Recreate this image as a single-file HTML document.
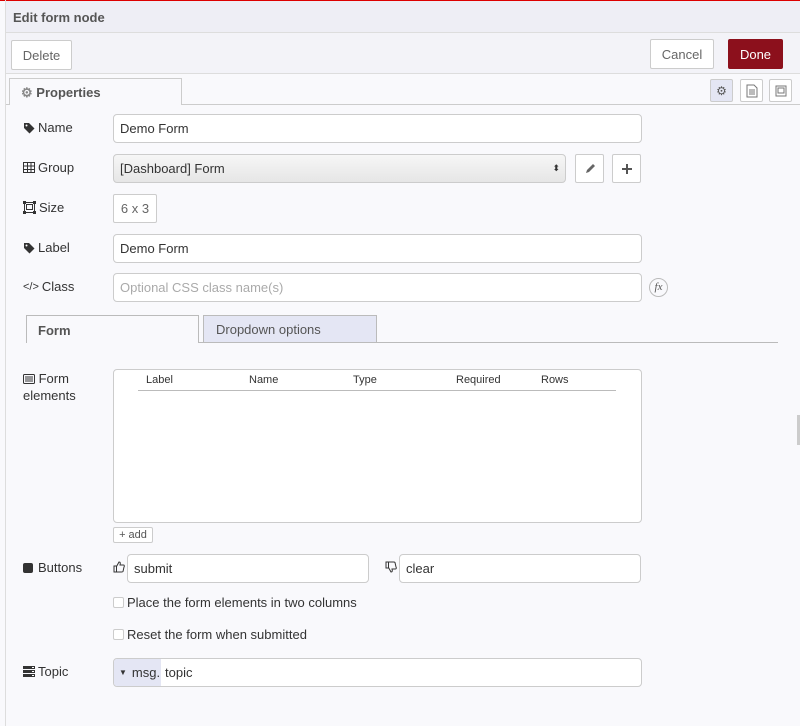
<!DOCTYPE html>
<html><head><style>
*{box-sizing:border-box;margin:0;padding:0}
body{width:800px;height:726px;overflow:hidden;background:#f9f9fc;font-family:"Liberation Sans",sans-serif;font-size:13px;color:#333;position:relative}
.a{position:absolute}
.inp{position:absolute;background:#fff;border:1px solid #ccc;border-radius:4px;padding-left:6px;display:flex;align-items:center;font-size:13px;color:#333}
.btn{position:absolute;background:#fff;border:1px solid #ccc;border-radius:2px;display:flex;align-items:center;justify-content:center;color:#555}
.lbl{position:absolute;left:23px;font-size:13px;color:#333;display:flex;align-items:center;gap:3px}
.cb{position:absolute;left:113px;width:11px;height:11px;border:1px solid #ccc;background:#fff;border-radius:2px}
</style></head><body>
<div class="a" style="left:0;top:0;width:800px;height:1px;background:#d00"></div>
<div class="a" style="left:5px;top:1px;width:795px;height:32px;background:#eeeef5;border-bottom:1px solid #ddd"></div>
<div class="a" style="left:5px;top:0;width:1px;height:726px;background:#ddd"></div>
<div class="a" style="left:13px;top:10px;font-weight:bold;font-size:13px;color:#555">Edit form node</div>
<div class="a" style="left:6px;top:33px;width:794px;height:41px;background:#f3f3f8;border-bottom:1px solid #ddd"></div>
<div class="btn" style="left:11px;top:40px;width:61px;height:30px;color:#666">Delete</div>
<div class="btn" style="left:650px;top:39px;width:64px;height:30px;color:#666">Cancel</div>
<div class="btn" style="left:728px;top:39px;width:55px;height:30px;background:#8c101c;border-color:#8c101c;color:#fff">Done</div>
<div class="a" style="left:6px;top:104px;width:794px;height:1px;background:#ccc"></div>
<div class="a" style="left:9px;top:78px;width:173px;height:27px;background:#f9f9fc;border:1px solid #ccc;border-bottom:none;font-weight:bold;color:#555;padding:6px 0 0 11px"><span style="color:#888">⚙</span> Properties</div>
<div class="btn" style="left:710px;top:79px;width:23px;height:23px;background:#e4e6f4;font-size:12px">⚙</div>
<div class="btn" style="left:740px;top:79px;width:23px;height:23px"><svg width="12" height="14"><path d="M1 1h7l3 3v9H1z M3 6h6M3 8h6M3 10h6" fill="none" stroke="#777"/></svg></div>
<div class="btn" style="left:769px;top:79px;width:23px;height:23px"><svg width="14" height="14"><rect x="2" y="2" width="10" height="10" fill="none" stroke="#777"/><rect x="4" y="4" width="6" height="5" fill="none" stroke="#777"/></svg></div>

<div class="lbl" style="top:120px"><svg width="12" height="12"><path d="M1 1h5l5.5 5.5-5 5L1 6z" fill="#333"/><circle cx="3.5" cy="3.5" r="1" fill="#fff"/></svg>Name</div>
<div class="inp" style="left:113px;top:114px;width:529px;height:29px">Demo Form</div>
<div class="lbl" style="top:160px"><svg width="12" height="11"><rect x="0.5" y="0.5" width="11" height="10" fill="none" stroke="#333"/><path d="M0 4h12M0 7.5h12M4.5 0v11M8 0v11" stroke="#333"/></svg>Group</div>
<div class="inp" style="left:113px;top:154px;width:453px;height:29px;background:linear-gradient(#f6f6f6,#e6e6e6)">[Dashboard] Form<span style="position:absolute;right:5px;font-size:9px">⬍</span></div>
<div class="btn" style="left:575px;top:154px;width:29px;height:29px"><svg width="12" height="12"><path d="M2 10l1-3 6-6 2 2-6 6z" fill="#666"/></svg></div>
<div class="btn" style="left:612px;top:154px;width:29px;height:29px"><svg width="10" height="10"><path d="M5 0v10M0 5h10" stroke="#555" stroke-width="2"/></svg></div>
<div class="lbl" style="top:200px"><svg width="13" height="13"><rect x="1.5" y="1.5" width="10" height="10" fill="none" stroke="#333"/><rect x="3.5" y="3.5" width="6" height="5" fill="none" stroke="#333"/><rect x="0" y="0" width="3" height="3" fill="#333"/><rect x="10" y="0" width="3" height="3" fill="#333"/><rect x="0" y="10" width="3" height="3" fill="#333"/><rect x="10" y="10" width="3" height="3" fill="#333"/></svg>Size</div>
<div class="btn" style="left:113px;top:194px;width:44px;height:29px;color:#666">6 x 3</div>
<div class="lbl" style="top:240px"><svg width="12" height="12"><path d="M1 1h5l5.5 5.5-5 5L1 6z" fill="#333"/><circle cx="3.5" cy="3.5" r="1" fill="#fff"/></svg>Label</div>
<div class="inp" style="left:113px;top:234px;width:529px;height:29px">Demo Form</div>
<div class="lbl" style="top:279px"><span style="font-size:11px">&lt;/&gt;</span> Class</div>
<div class="inp" style="left:113px;top:273px;width:529px;height:29px;color:#aaa">Optional CSS class name(s)</div>
<div class="a" style="left:649px;top:278px;width:19px;height:19px;border:1px solid #bbb;border-radius:50%;font-family:'Liberation Serif',serif;font-style:italic;font-size:11px;text-align:center;line-height:17px;color:#555">fx</div>

<div class="a" style="left:26px;top:342px;width:752px;height:1px;background:#bbb"></div>
<div class="a" style="left:26px;top:315px;width:173px;height:28px;background:#f9f9fc;border:1px solid #bbb;border-bottom:none;font-weight:bold;color:#555;padding:7px 0 0 11px">Form</div>
<div class="a" style="left:203px;top:315px;width:174px;height:28px;background:#e4e6f4;border:1px solid #bbb;color:#555;padding:6px 0 0 12px">Dropdown options</div>

<div class="a" style="left:23px;top:370px;line-height:17px"><svg width="12" height="10" style="vertical-align:-1px"><rect x="0.5" y="0.5" width="11" height="9" rx="1" fill="none" stroke="#333"/><path d="M2 3h8M2 5h8M2 7h8" stroke="#333"/></svg> Form<br>elements</div>
<div class="a" style="left:113px;top:369px;width:529px;height:154px;background:#fff;border:1px solid #ccc;border-radius:4px"></div>
<div class="a" style="top:374px;left:146px;font-size:11px">Label</div>
<div class="a" style="top:374px;left:249px;font-size:11px">Name</div>
<div class="a" style="top:374px;left:353px;font-size:11px">Type</div>
<div class="a" style="top:374px;left:456px;font-size:11px">Required</div>
<div class="a" style="top:374px;left:541px;font-size:11px">Rows</div>
<div class="a" style="left:138px;top:390px;width:478px;height:1px;background:#bbb"></div>
<div class="btn" style="left:113px;top:527px;width:40px;height:16px;font-size:11px">+ add</div>

<div class="lbl" style="top:560px"><span style="display:inline-block;width:10px;height:10px;background:#333;border-radius:2px;margin-right:2px"></span>Buttons</div>
<svg class="a" style="left:113px;top:561px" width="12" height="12"><path d="M1 5h2.5v6H1z M3.5 5.5L6 1c1.5 0 1.5 1 1 3h3.5c1 0 1 1.5 0.5 2l-1 4.5c-0.3 0.5-1 0.5-1.5 0.5H3.5" fill="none" stroke="#333"/></svg>
<div class="inp" style="left:127px;top:554px;width:242px;height:29px">submit</div>
<svg class="a" style="left:385px;top:561px" width="12" height="12"><g transform="translate(0,12) scale(1,-1)"><path d="M1 5h2.5v6H1z M3.5 5.5L6 1c1.5 0 1.5 1 1 3h3.5c1 0 1 1.5 0.5 2l-1 4.5c-0.3 0.5-1 0.5-1.5 0.5H3.5" fill="none" stroke="#333"/></g></svg>
<div class="inp" style="left:399px;top:554px;width:242px;height:29px">clear</div>
<div class="cb" style="top:597px"></div>
<div class="a" style="left:127px;top:595px">Place the form elements in two columns</div>
<div class="cb" style="top:629px"></div>
<div class="a" style="left:127px;top:627px">Reset the form when submitted</div>

<div class="lbl" style="top:664px"><svg width="12" height="11"><rect x="0" y="0" width="12" height="3" fill="#333"/><rect x="0" y="4" width="12" height="3" fill="#333"/><rect x="0" y="8" width="12" height="3" fill="#333"/><rect x="9" y="1" width="2" height="1" fill="#fff"/><rect x="9" y="5" width="2" height="1" fill="#fff"/><rect x="9" y="9" width="2" height="1" fill="#fff"/></svg>Topic</div>
<div class="inp" style="left:113px;top:658px;width:529px;height:29px;padding-left:0;overflow:hidden"><span style="background:#e4e6f4;height:100%;display:flex;align-items:center;padding:0 4px 0 5px;width:47px"><span style="font-size:8px;margin-right:5px">▼</span>msg.</span><span style="margin-left:4px">topic</span></div>
<div class="a" style="left:797px;top:415px;width:3px;height:30px;background:#ccc"></div>
</body></html>
